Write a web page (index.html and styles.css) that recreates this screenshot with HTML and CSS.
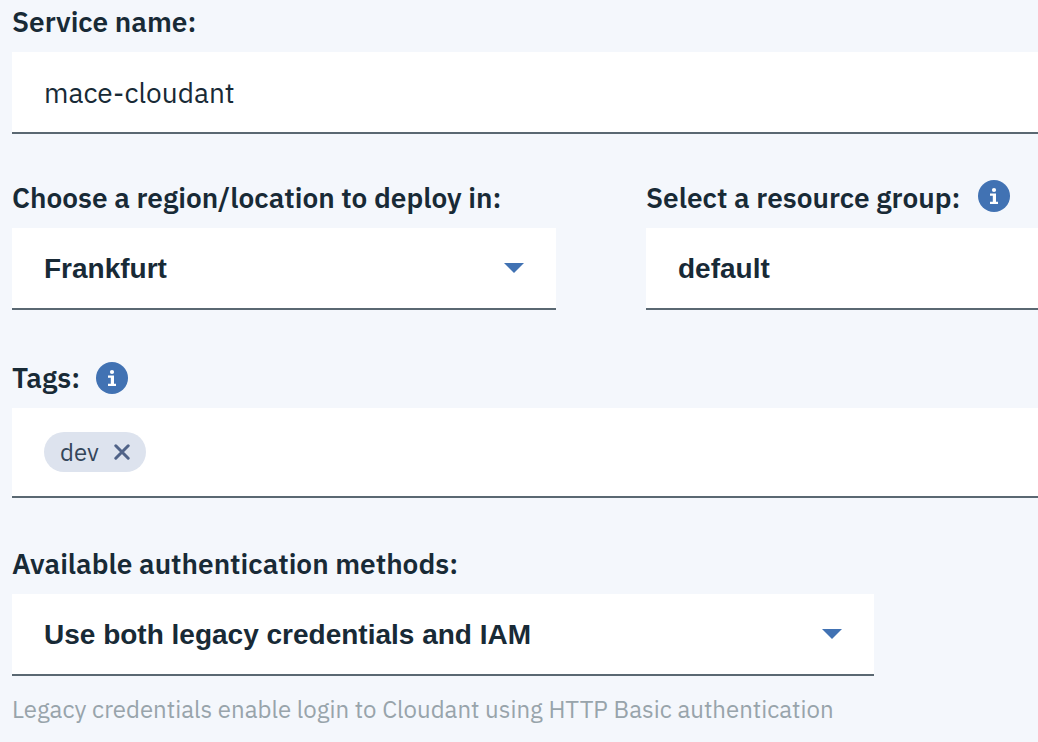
FILE: index.html
```html
<!DOCTYPE html>
<html lang="en">
<head>
<meta charset="utf-8">
<title>Create service</title>
<link rel="stylesheet" href="styles.css">
</head>
<body>
<form class="form">
  <div class="field">
    <div class="heading"><label for="name">Service name:</label></div>
    <input class="control text" id="name" type="text" value="mace-cloudant">
  </div>
  <div class="row">
    <div class="field">
      <div class="heading"><label for="region">Choose a region/location to deploy in:</label></div>
      <div class="picker">
        <select class="control select" id="region"><option>Frankfurt</option></select>
        <svg class="arrow" viewBox="0 0 20 10" aria-hidden="true"><path d="M0 0h20L10 10z"/></svg>
      </div>
    </div>
    <div class="field group">
      <div class="heading">
        <label for="group">Select a resource group:</label>
        <button class="info" type="button" aria-label="About resource groups"><svg viewBox="0 0 32 32"><circle cx="16" cy="16" r="16"/><path d="M12 13.4h6v8.3h2V24h-8v-2.3h2.8v-6H12z"/><circle class="dot" cx="16" cy="10" r="2.1"/></svg></button>
      </div>
      <div class="picker">
        <select class="control select" id="group"><option>default</option></select>
      </div>
    </div>
  </div>
  <div class="field tagging">
    <div class="heading">
      <label for="tags">Tags:</label>
      <button class="info" type="button" aria-label="About tags"><svg viewBox="0 0 32 32"><circle cx="16" cy="16" r="16"/><path d="M12 13.4h6v8.3h2V24h-8v-2.3h2.8v-6H12z"/><circle class="dot" cx="16" cy="10" r="2.1"/></svg></button>
    </div>
    <div class="control tags">
      <span class="tag">dev<button class="remove" type="button" aria-label="Remove dev"><svg viewBox="0 0 16 16"><path d="M1.8 1.8l12.4 12.4M14.2 1.8L1.8 14.2"/></svg></button></span>
      <input class="entry" id="tags" type="text">
    </div>
  </div>
  <div class="field auth">
    <div class="heading"><label for="auth">Available authentication methods:</label></div>
    <div class="picker">
      <select class="control select" id="auth"><option>Use both legacy credentials and IAM</option></select>
      <svg class="arrow" viewBox="0 0 20 10" aria-hidden="true"><path d="M0 0h20L10 10z"/></svg>
    </div>
    <p class="help">Legacy credentials enable login to Cloudant using HTTP Basic authentication</p>
  </div>
</form>
</body>
</html>
```
FILE: styles.css
```css
* { box-sizing: border-box; }
body {
  margin: 0;
  background: #f4f7fc;
  color: #182a36;
  font-family: "IBM Plex Sans", "Noto Sans", sans-serif;
  overflow-x: hidden;
}
button { border: 0; padding: 0; background: none; }
svg { display: block; width: 100%; height: 100%; }
.form { padding: 4px 0 16px 12px; display: flex; flex-direction: column; gap: 46px; }
.row { display: grid; grid-template-columns: 544px 1fr; gap: 90px; }
.heading {
  display: flex;
  align-items: center;
  gap: 18px;
  height: 36px;
  margin-bottom: 12px;
  font-size: 28px;
  line-height: 36px;
  font-weight: 600;
  white-space: nowrap;
}
.control {
  display: block;
  width: 100%;
  height: 82px;
  padding: 0 32px;
  border: 0;
  border-bottom: 2px solid #5a6872;
  border-radius: 0;
  background: #fff;
  color: #182a36;
  outline: 0;
}
.text { font: 28px "IBM Plex Sans", "Noto Sans", sans-serif; }
.select { appearance: none; font: bold 28px "Liberation Sans", Arial, sans-serif; }
.picker { position: relative; }
.arrow { position: absolute; right: 32px; top: 35px; width: 20px; height: 10px; fill: #4172b3; }
.info { width: 32px; height: 32px; fill: #4172b3; }
.group .info { margin-bottom: 4px; }
.info path, .info .dot { fill: #fff; }
.tagging { margin-top: 4px; }
.tagging .heading { gap: 16px; }
.tags { display: flex; align-items: center; gap: 16px; height: 90px; }
.tag {
  display: flex;
  align-items: center;
  gap: 15px;
  height: 40px;
  padding: 0 16px;
  border-radius: 20px;
  background: #dde3ee;
  color: #34465a;
  font-size: 24px;
}
.remove { width: 16px; height: 16px; stroke: #506388; stroke-width: 3; stroke-linecap: round; fill: none; }
.entry { flex: 1; min-width: 0; height: 40px; border: 0; outline: 0; background: none; font: inherit; }
.auth { width: 862px; max-width: 100%; margin-top: 2px; }
.help { margin: 16px 0 0; color: #98a4ab; font-size: 24px; line-height: 34px; }
```
